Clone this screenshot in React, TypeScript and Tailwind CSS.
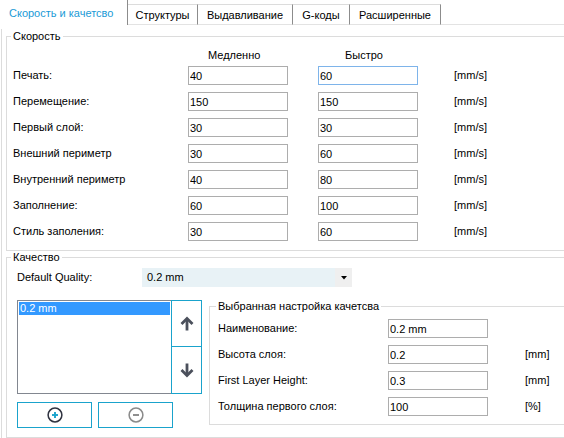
import React from 'react';

const speedRows = [
  { label: 'Печать:', slow: '40', fast: '60', focused: true },
  { label: 'Перемещение:', slow: '150', fast: '150' },
  { label: 'Первый слой:', slow: '30', fast: '30' },
  { label: 'Внешний периметр', slow: '30', fast: '60' },
  { label: 'Внутренний периметр', slow: '40', fast: '80' },
  { label: 'Заполнение:', slow: '60', fast: '100' },
  { label: 'Стиль заполения:', slow: '30', fast: '60' },
];

const qualityRows = [
  { label: 'Наименование:', value: '0.2 mm', unit: '' },
  { label: 'Высота слоя:', value: '0.2', unit: '[mm]' },
  { label: 'First Layer Height:', value: '0.3', unit: '[mm]' },
  { label: 'Толщина первого слоя:', value: '100', unit: '[%]' },
];

const tabs = [
  { name: 'Структуры', w: 'w-[70px]' },
  { name: 'Выдавливание', w: 'w-[95px]' },
  { name: 'G-коды', w: 'w-[57px]' },
  { name: 'Расширенные', w: 'w-[91px]' },
];

function TextBox({ value, focused }: { value: string; focused?: boolean }) {
  return (
    <input
      readOnly
      value={value}
      className={`h-[19px] w-[100px] shrink-0 border bg-white pl-[1px] text-[11px] leading-[17px] text-black outline-none ${
        focused ? 'border-[#7eb4ea]' : 'border-[#adadad]'
      }`}
    />
  );
}

function ArrowIcon({ down }: { down?: boolean }) {
  return (
    <svg width="14" height="15" viewBox="0 0 14 15" className={down ? 'rotate-180' : ''}>
      <path d="M7 14.5V3" stroke="#4b505c" strokeWidth="2.8" fill="none" />
      <path d="M1.5 8L7 2.5L12.5 8" stroke="#4b505c" strokeWidth="2.8" fill="none" />
    </svg>
  );
}

function CircleIcon({ plus }: { plus?: boolean }) {
  const ring = plus ? '#2f3340' : '#8a8a8a';
  return (
    <svg width="16" height="16" viewBox="0 0 16 16">
      <circle cx="8" cy="8" r="6.9" stroke={ring} strokeWidth="1.5" fill="none" />
      <path d="M5 8H11" stroke={plus ? '#1aa3cc' : '#8a8a8a'} strokeWidth="1.9" />
      {plus && <path d="M8 5V11" stroke="#1aa3cc" strokeWidth="1.9" />}
    </svg>
  );
}

export default function App() {
  return (
    <div className="h-[438px] w-[564px] overflow-hidden bg-white font-['Liberation_Sans',Arial,sans-serif] text-[11px] text-black">
      {/* Tab strip */}
      <div className="flex h-[25px] items-end whitespace-nowrap">
        <div className="h-[25px] w-[128px] shrink-0 border-r border-r-[#8c8c8c] pl-[9px] leading-[26px] text-[#1a9ad6]">
          Скорость и качетсво
        </div>
        {tabs.map((t) => (
          <div
            key={t.name}
            className={`h-[21px] ${t.w} shrink-0 border-t border-b border-r border-t-[#dcdcdc] border-b-[#e3e3e3] border-r-[#8c8c8c] text-center leading-[20px]`}
          >
            {t.name}
          </div>
        ))}
        <div className="h-[21px] flex-1 border-b border-[#e3e3e3]" />
      </div>

      {/* Tab page */}
      <div className="ml-px h-[413px] border-l border-[#dcdcdc] pl-[4px]">
        {/* Speed */}
        <fieldset className="mr-[-30px] mt-[4px] border border-[#dcdcdc]">
          <legend className="ml-[4px] px-[2px] leading-[14px]">Скорость</legend>
          <div className="pb-[9px] pl-[6px]">
            <div className="mt-[4px] flex h-[16px] items-center leading-[16px]">
              <div className="w-[175px] shrink-0" />
              <div className="w-[100px] shrink-0 pl-[20px]">Медленно</div>
              <div className="ml-[30px] w-[100px] shrink-0 pl-[27px]">Быстро</div>
            </div>
            <div className="mt-[3px] flex flex-col gap-[7px]">
              {speedRows.map((r) => (
                <div key={r.label} className="flex h-[19px] items-center">
                  <div className="w-[175px] shrink-0">{r.label}</div>
                  <TextBox value={r.slow} />
                  <div className="ml-[30px]">
                    <TextBox value={r.fast} focused={r.focused} />
                  </div>
                  <div className="ml-[36px]">[mm/s]</div>
                </div>
              ))}
            </div>
          </div>
        </fieldset>

        {/* Quality */}
        <fieldset className="mr-[-30px] mt-[-1px] border border-[#dcdcdc]">
          <legend className="ml-[4px] px-[2px] leading-[14px]">Качество</legend>
          <div className="pb-[9px] pl-[10px]">
            <div className="mt-[4px] flex h-[19px] items-center">
              <div className="w-[125px] shrink-0">Default Quality:</div>
              <div className="flex h-[19px] w-[210px] items-center bg-[#e8f2f6]">
                <div className="flex-1 pl-[5px]">0.2 mm</div>
                <div className="flex h-[19px] w-[17px] items-center justify-center bg-[#efefef]">
                  <svg width="6" height="4" viewBox="0 0 6 4">
                    <path d="M0 0H6L3 3.5Z" fill="#000" />
                  </svg>
                </div>
              </div>
            </div>

            <div className="mt-[11px] flex items-start">
              <div className="mt-[2px] w-[185px] shrink-0">
                <div className="flex">
                  <div className="h-[94px] w-[155px] shrink-0 border border-[#828790] p-px">
                    <div className="h-[13px] bg-[#3399ff] pl-px leading-[13px] text-white">0.2 mm</div>
                  </div>
                  <div className="-ml-px flex w-[31px] flex-col">
                    <div className="flex h-[47px] items-center justify-center border border-[#1aa3cc]">
                      <ArrowIcon />
                    </div>
                    <div className="-mt-px flex h-[48px] items-center justify-center border border-[#1aa3cc]">
                      <ArrowIcon down />
                    </div>
                  </div>
                </div>
                <div className="mt-[8px] flex gap-[6px]">
                  <div className="flex h-[26px] w-[75px] items-center justify-center border border-[#1aa3cc]">
                    <CircleIcon plus />
                  </div>
                  <div className="flex h-[26px] w-[75px] items-center justify-center border border-[#1aa3cc]">
                    <CircleIcon />
                  </div>
                </div>
              </div>

              <fieldset className="ml-[7px] mt-[1px] flex-1 border border-[#dcdcdc]">
                <legend className="ml-[6px] px-[2px] leading-[14px]">Выбранная настройка качетсва</legend>
                <div className="mt-[6px] flex flex-col gap-[7px] pb-[8px] pl-[8px]">
                  {qualityRows.map((r) => (
                    <div key={r.label} className="flex h-[19px] items-center">
                      <div className="w-[170px] shrink-0">{r.label}</div>
                      <TextBox value={r.value} />
                      <div className="ml-[37px]">{r.unit}</div>
                    </div>
                  ))}
                </div>
              </fieldset>
            </div>
          </div>
        </fieldset>
      </div>
    </div>
  );
}
